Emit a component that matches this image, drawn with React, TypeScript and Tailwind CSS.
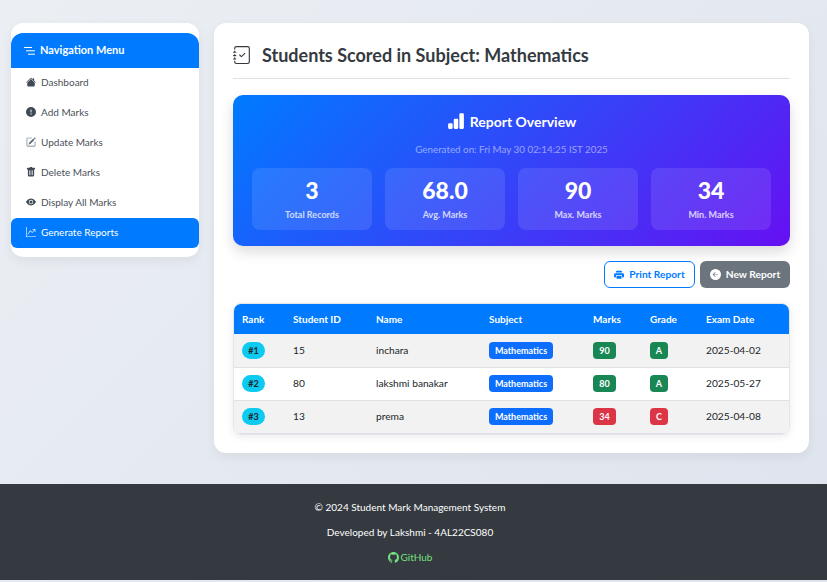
import React from "react";
import { BsJournalCheck, BsBarChartFill, BsHouseFill, BsExclamationCircleFill, BsPencilSquare, BsTrashFill, BsEyeFill, BsGraphUpArrow, BsPrinterFill, BsArrowLeftCircleFill, BsGithub } from "react-icons/bs";

const nav: [string, React.ComponentType<{ className?: string }>, string][] = [
  ["Dashboard", BsHouseFill, "text-[#3f4a56]"],
  ["Add Marks", BsExclamationCircleFill, "text-[#3f4a56]"],
  ["Update Marks", BsPencilSquare, "text-[#5f6b78]"],
  ["Delete Marks", BsTrashFill, "text-[#3f4a56]"],
  ["Display All Marks", BsEyeFill, "text-[#3f4a56]"],
];

const stats = [
  ["3", "Total Records"],
  ["68.0", "Avg. Marks"],
  ["90", "Max. Marks"],
  ["34", "Min. Marks"],
];

const rows = [
  ["#1", "15", "inchara", "90", "A", "2025-04-02", "bg-[#198754]"],
  ["#2", "80", "lakshmi banakar", "80", "A", "2025-05-27", "bg-[#198754]"],
  ["#3", "13", "prema", "34", "C", "2025-04-08", "bg-[#dc3545]"],
];

export default function App() {
  return (
    <div className="flex min-h-[582px] flex-col bg-[linear-gradient(135deg,#ebeff4,#dee4ed)] font-['Lato','Liberation_Sans',sans-serif] text-[#212529]">
      <div className="flex h-[484px] items-start gap-[15px] pl-[11px] pr-[18px] pt-[23px]">
        <aside className="h-[234px] w-[188px] shrink-0 rounded-xl bg-white pt-[10px] shadow-[0_4px_12px_rgba(0,0,0,0.06)]">
          <div className="flex h-[35px] items-center gap-[5px] rounded-t-xl bg-[#007bff] pl-[13px] text-[11px] font-bold text-white">
            <svg viewBox="0 0 11 8" className="h-[8px] w-[11px]" stroke="currentColor" strokeWidth="1" fill="none">
              <path d="M0 .5h8M2 3.8h9M4 7.2h7" />
            </svg>
            Navigation Menu
          </div>
          {nav.map(([label, Icon, color]) => (
            <div key={label} className="flex h-[30px] items-center gap-[5px] pb-[2px] pl-[15px] text-[10px] text-[#495057]">
              <Icon className={`h-[10px] w-[10px] ${color}`} />
              {label}
            </div>
          ))}
          <div className="flex h-[30px] items-center gap-[5px] rounded-md bg-[#007bff] pb-[2px] pl-[15px] text-[10px] text-white">
            <BsGraphUpArrow className="h-[10px] w-[10px]" />
            Generate Reports
          </div>
        </aside>

        <main className="h-[430px] w-[595px] rounded-xl bg-white px-[19px] pt-[19px] shadow-[0_4px_12px_rgba(0,0,0,0.06)]">
          <div className="flex h-[37px] items-center gap-[11px] border-b border-[#dee2e6] pb-[10px]">
            <BsJournalCheck className="h-[18px] w-[18px] text-[#343a40]" />
            <h1 className="text-[18px] font-bold leading-none text-[#343a40]">Students Scored in Subject: Mathematics</h1>
          </div>

          <section className="mt-[16px] h-[151px] rounded-[10px] bg-[linear-gradient(135deg,#007bff,#6610f2)] px-[19px] pt-[15px] shadow-[0_6px_14px_rgba(0,0,0,0.14)]">
            <div className="flex h-[22px] items-center justify-center gap-[5px] text-[14px] font-bold text-white">
              <BsBarChartFill className="h-[18px] w-[18px]" />
              Report Overview
            </div>
            <p className="mt-[10px] text-center text-[9.8px] text-white/50">Generated on: Fri May 30 02:14:25 IST 2025</p>
            <div className="mt-[11px] grid grid-cols-4 gap-[13px]">
              {stats.map(([value, label]) => (
                <div key={label} className="flex h-[62px] flex-col items-center rounded-lg bg-white/10 pt-[8px] text-white">
                  <div className="text-[23px] font-black leading-[28px]">{value}</div>
                  <div className="mt-[4px] text-[9px] font-bold opacity-75">{label}</div>
                </div>
              ))}
            </div>
          </section>

          <div className="mt-[15px] flex justify-end gap-[5px]">
            <button className="flex h-[27px] w-[91px] items-center justify-center gap-[5px] rounded-md border border-[#007bff] bg-white text-[10.2px] font-bold text-[#007bff]">
              <BsPrinterFill className="h-[10px] w-[10px]" />
              Print Report
            </button>
            <button className="flex h-[27px] w-[90px] items-center justify-center gap-[5px] rounded-md bg-[#6c757d] text-[10.2px] font-bold text-white">
              <BsArrowLeftCircleFill className="h-[11px] w-[11px]" />
              New Report
            </button>
          </div>

          <div className="mt-[15px] overflow-hidden rounded-lg border border-[#e2e5ea] shadow-[0_2px_8px_rgba(0,0,0,0.08)]">
            <table className="w-full table-fixed border-collapse text-left text-[10.2px]">
              <colgroup>
                <col className="w-[51px]" />
                <col className="w-[83px]" />
                <col className="w-[113px]" />
                <col className="w-[104px]" />
                <col className="w-[57px]" />
                <col className="w-[56px]" />
                <col />
              </colgroup>
              <thead>
                <tr className="h-[30px] bg-[#007bff] font-bold text-white">
                  {["Rank", "Student ID", "Name", "Subject", "Marks", "Grade", "Exam Date"].map((h) => (
                    <th key={h} className="pl-[8px] text-[10px] font-bold">{h}</th>
                  ))}
                </tr>
              </thead>
              <tbody>
                {rows.map(([rank, id, name, marks, grade, date, color], i) => (
                  <tr key={rank} className={`h-[33px] border-b border-[#dee2e6] ${i % 2 === 0 ? "bg-[#f2f2f2]" : "bg-white"}`}>
                    <td className="pl-[8px]">
                      <span className="inline-flex h-[17px] w-[23px] items-center justify-center rounded-full bg-[#0dcaf0] text-[9px] font-bold">{rank}</span>
                    </td>
                    <td className="pl-[8px]">{id}</td>
                    <td className="pl-[8px]">{name}</td>
                    <td className="pl-[8px]">
                      <span className="inline-flex h-[17px] w-[64px] items-center justify-center rounded bg-[#0d6efd] text-[9px] font-bold text-white">Mathematics</span>
                    </td>
                    <td className="pl-[8px]">
                      <span className={`inline-flex h-[17px] w-[23px] items-center justify-center rounded text-[9px] font-bold text-white ${color}`}>{marks}</span>
                    </td>
                    <td className="pl-[8px]">
                      <span className={`inline-flex h-[17px] w-[18px] items-center justify-center rounded text-[9px] font-bold text-white ${color}`}>{grade}</span>
                    </td>
                    <td className="pl-[8px]">{date}</td>
                  </tr>
                ))}
              </tbody>
            </table>
          </div>
        </main>
      </div>

      <footer className="flex h-[96px] flex-col items-center bg-[#343a40] pr-[7px] pt-[17px] text-[10px] text-white">
        <p className="leading-[13px]">© 2024 Student Mark Management System</p>
        <p className="mt-[12px] leading-[13px]">Developed by Lakshmi - 4AL22CS080</p>
        <p className="mt-[12px] flex items-center gap-[2px] leading-[13px] text-[#75e07f]">
          <BsGithub className="h-[11px] w-[11px]" />
          GitHub
        </p>
      </footer>
    </div>
  );
}
